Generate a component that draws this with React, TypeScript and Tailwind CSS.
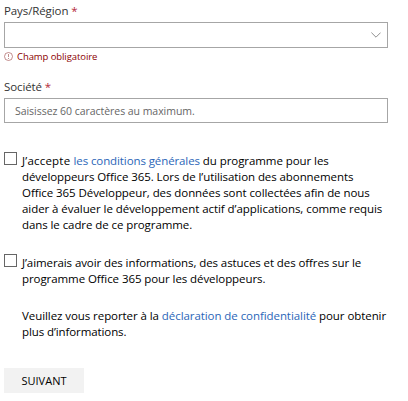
import type { ReactNode } from 'react';

function Line({ children, className = '' }: { children: ReactNode; className?: string }) {
  return <span className={`block whitespace-nowrap ${className}`}>{children}</span>;
}

function Label({ children }: { children: ReactNode }) {
  return (
    <label className="block h-4 text-[11.5px] leading-4 tracking-[-0.1px] text-[#333]">
      {children} <span className="text-[#b52a3a]">*</span>
    </label>
  );
}

function Checkbox() {
  return <span role="checkbox" aria-checked="false" className="block size-[13px] shrink-0 border border-[#666] bg-white" />;
}

export default function App() {
  return (
    <main className="h-[401px] w-[408px] overflow-hidden bg-white pl-1 pt-[3px] font-['Open_Sans','Noto_Sans',sans-serif] text-[11.5px] leading-4 text-black">
      <Label>Pays/Région</Label>
      <div className="mt-[3px] flex h-[26px] w-[384px] items-center justify-end border border-[#a6a6a6] pr-[6px]">
        <svg className="mb-px" width="10" height="6" viewBox="0 0 10 6" fill="none" stroke="#8f8f8f">
          <path d="M.4 .6 5 5.2 9.6 .6" />
        </svg>
      </div>
      <div className="mt-[2px] flex h-[13px] items-center text-[9.5px] leading-[13px] tracking-[-0.08px] text-[#8b0000]">
        <svg className="mb-px mr-1 shrink-0" width="9" height="9" viewBox="0 0 9 9" fill="none" stroke="#a85c5c" strokeWidth=".7">
          <circle cx="4.5" cy="4.5" r="4" />
          <path d="M4.5 2v3M4.5 6v1" />
        </svg>
        <span>Champ obligatoire</span>
      </div>
      <div className="mt-4">
        <Label>Société</Label>
      </div>
      <div className="mt-[3px] flex h-[25px] w-[384px] items-center border border-[#a6a6a6] pl-[10px] text-[10.5px] tracking-[-0.04px] text-[#666]">
        <span>Saisissez 60 caractères au maximum.</span>
      </div>
      <div className="mt-[29px] flex gap-[5px]">
        <Checkbox />
        <p className="pt-px">
          <Line className="tracking-[-0.07px]"><span className="tracking-[0.2px]">J’accepte </span><a className="tracking-[-0.1px] text-[#2b66b8]">les conditions générales</a> du programme pour les</Line>
          <Line className="tracking-[-0.08px]">développeurs Office 365. Lors de l’utilisation des abonnements</Line>
          <Line className="tracking-[-0.07px]">Office 365 Développeur, des données sont collectées afin de nous</Line>
          <Line className="tracking-[-0.06px]">aider à évaluer le développement actif d’applications, comme requis</Line>
          <Line className="tracking-[-0.08px]">dans le cadre de ce programme.</Line>
        </p>
      </div>
      <div className="mt-[21px] flex gap-[5px]">
        <Checkbox />
        <p className="pt-px">
          <Line className="tracking-[-0.09px]">J’aimerais avoir des informations, des astuces et des offres sur le</Line>
          <Line className="tracking-[-0.08px]">programme Office 365 pour les développeurs.</Line>
        </p>
      </div>
      <p className="ml-[18px] mt-[21px]">
        <Line className="tracking-[-0.07px]">Veuillez vous reporter à la <a className="text-[#2b66b8]">déclaration de confidentialité</a> pour obtenir</Line>
        <Line className="tracking-[-0.1px]">plus d’informations.</Line>
      </p>
      <button className="mt-7 flex h-[25px] w-20 items-center justify-center bg-[#f2f2f2] text-[11px]">SUIVANT</button>
    </main>
  );
}
